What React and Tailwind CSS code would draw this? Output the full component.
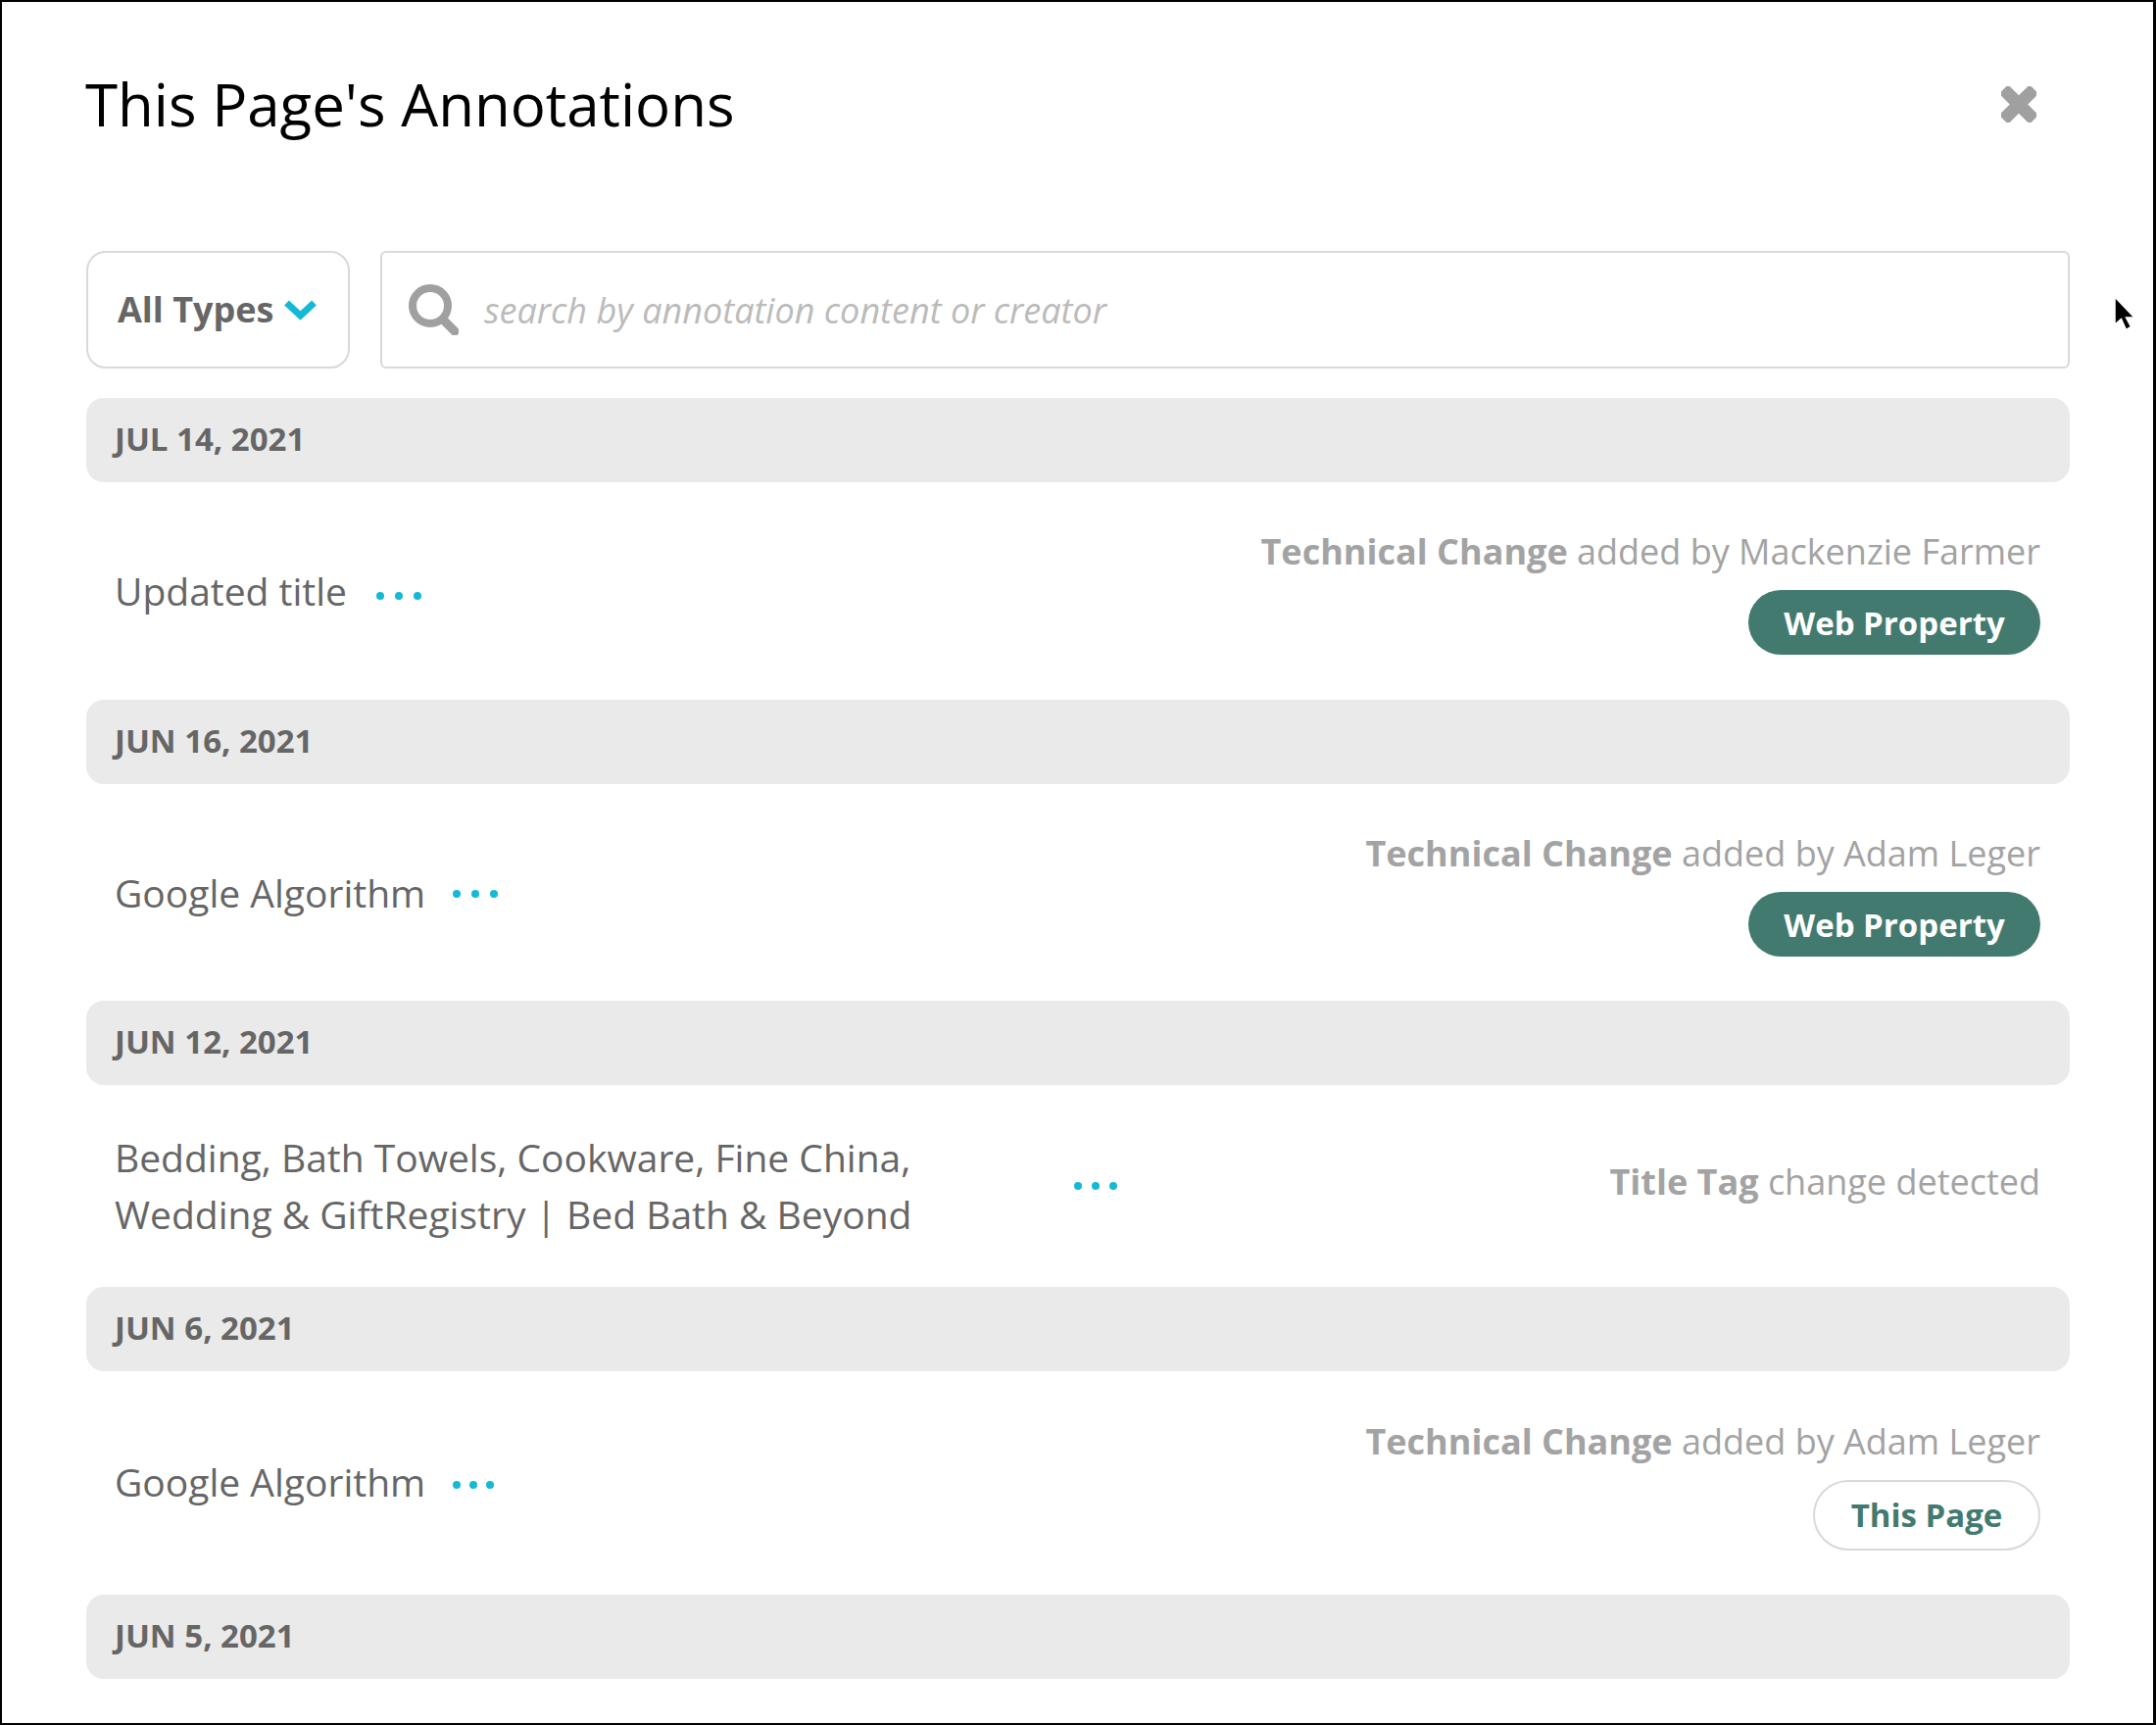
// App.jsx - annotations modal
const Dots = ({ className = '' }) => (
  <span className={`flex ${className}`}>
    <span className="w-[8px] h-[8px] rounded-full bg-[#14b9d5]" />
    <span className="w-[8px] h-[8px] rounded-full bg-[#14b9d5]" />
    <span className="w-[8px] h-[8px] rounded-full bg-[#14b9d5]" />
  </span>
);

const DateBar = ({ children }) => (
  <div className="h-[86px] flex items-center px-[29px] pb-[2px] rounded-[18px] bg-[#eaeaea] text-[33px] font-bold text-[#666666]">
    {children}
  </div>
);

const Meta = ({ kind, by, className = '' }) => (
  <p className={`text-[36px] leading-[56px] text-[#a3a3a3] ${className}`}>
    <span className="font-bold">{kind}</span> {by}
  </p>
);

const WebProperty = () => (
  <span className="mt-[11px] h-[66px] w-[298px] flex items-center justify-center pt-[1px] rounded-full bg-[#437a70] text-white text-[33px] font-bold">
    Web Property
  </span>
);

const ThisPage = () => (
  <span className="mt-[11px] h-[72px] w-[232px] flex items-center justify-center rounded-full border-2 border-[#d9d9d9] text-[#437a70] text-[33px] font-bold">
    This Page
  </span>
);

export default function App() {
  return (
    <div className="relative w-[2200px] h-[1760px] overflow-hidden bg-white border-2 border-r-[3px] border-black font-['Open_Sans',sans-serif] pl-[86px] pr-[85px]">
      {/* header */}
      <div className="h-[254px] flex items-start justify-between">
        <h1 className="mt-[59px] -ml-[1px] text-[60px] leading-[90px] text-black">This Page's Annotations</h1>
        <button className="mt-[86px] mr-[34px]" aria-label="Close">
          <svg width="36" height="37" viewBox="0 0 36 37" fill="#a0a0a0">
            <rect x="-4" y="12" width="44" height="13" rx="3" transform="rotate(45 18 18.5)" />
            <rect x="-4" y="12" width="44" height="13" rx="3" transform="rotate(-45 18 18.5)" />
          </svg>
        </button>
      </div>

      {/* filters */}
      <div className="flex gap-[31px] mb-[30px]">
        <button className="w-[269px] h-[120px] flex items-center gap-[11px] pl-[30px] rounded-[20px] border-2 border-[#d9d9d9] text-[36px] font-bold text-[#666666]">
          All Types
          <svg width="33" height="21" viewBox="0 0 33 21" fill="none" stroke="#14b9d5" strokeWidth="7">
            <path d="M2.5 3l14 13 14-13" />
          </svg>
        </button>
        <div className="flex-1 h-[120px] flex items-center rounded-[6px] border-2 border-[#d9d9d9] pl-[27px]">
          <svg width="51" height="52" viewBox="0 0 51 52" fill="none" stroke="#a0a0a0" className="shrink-0">
            <circle cx="22" cy="22" r="18" strokeWidth="8" />
            <path d="M35 36l12 12" strokeWidth="9" strokeLinecap="round" />
          </svg>
          <input
            className="ml-[26px] mt-[2px] flex-1 bg-transparent outline-none text-[36px] italic placeholder:text-[#bbbbbb]"
            placeholder="search by annotation content or creator"
          />
        </div>
      </div>

      {/* annotation list */}
      <DateBar>JUL 14, 2021</DateBar>
      <div className="flex items-center justify-between pl-[29px] pr-[30px] pt-[43px] pb-[46px]">
        <div className="flex items-center mt-[3px] text-[39px] text-[#666666]">
          Updated title
          <Dots className="ml-[30px] mt-[10px] gap-[11px]" />
        </div>
        <div className="flex flex-col items-end">
          <Meta kind="Technical Change" by="added by Mackenzie Farmer" />
          <WebProperty />
        </div>
      </div>

      <DateBar>JUN 16, 2021</DateBar>
      <div className="flex items-center justify-between pl-[29px] pr-[30px] pt-[43px] pb-[45px]">
        <div className="flex items-center mt-[3px] text-[39px] text-[#666666]">
          Google Algorithm
          <Dots className="ml-[28px] mt-[2px] gap-[11px]" />
        </div>
        <div className="flex flex-col items-end">
          <Meta kind="Technical Change" by="added by Adam Leger" />
          <WebProperty />
        </div>
      </div>

      <DateBar>JUN 12, 2021</DateBar>
      <div className="flex items-center justify-between pl-[29px] pr-[30px] py-[45px]">
        <div className="flex items-center text-[39px] leading-[58px] text-[#666666]">
          <span className="w-[979px]">
            Bedding, Bath Towels, Cookware, Fine China,<br />
            Wedding &amp; GiftRegistry | Bed Bath &amp; Beyond
          </span>
          <Dots className="gap-[10px]" />
        </div>
        <Meta kind="Title Tag" by="change detected" className="mb-[8px]" />
      </div>

      <DateBar>JUN 6, 2021</DateBar>
      <div className="flex items-center justify-between pl-[29px] pr-[30px] pt-[44px] pb-[45px]">
        <div className="flex items-center text-[39px] text-[#666666]">
          Google Algorithm
          <Dots className="ml-[28px] mt-[5px] gap-[9px]" />
        </div>
        <div className="flex flex-col items-end">
          <Meta kind="Technical Change" by="added by Adam Leger" />
          <ThisPage />
        </div>
      </div>

      <DateBar>JUN 5, 2021</DateBar>

      {/* mouse pointer from the capture */}
      <svg className="absolute left-[2153px] top-[299px]" width="26" height="38" viewBox="0 0 26 38">
        <path d="M3 2v28l6.500-5.500 5 11 5-3-5-9.500h8.500z" fill="#000" stroke="#fff" strokeWidth="1.5" />
      </svg>
    </div>
  );
}
